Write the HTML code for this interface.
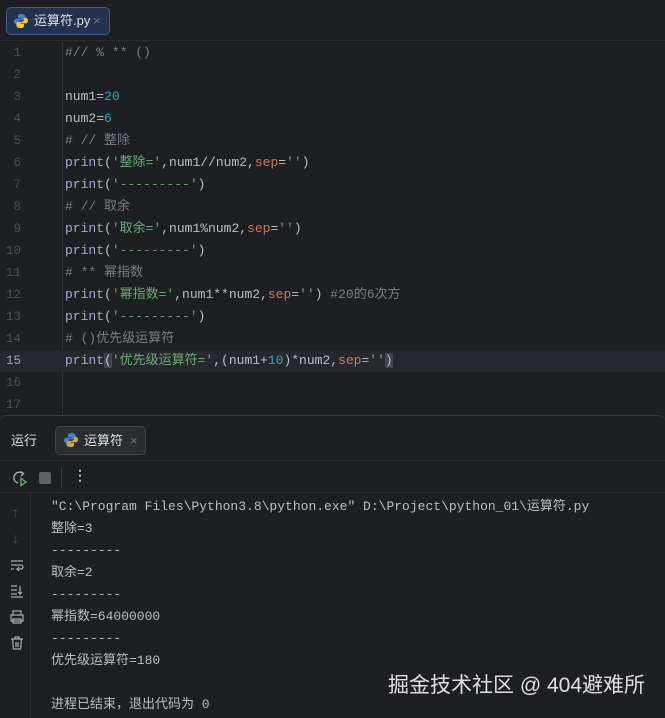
<!DOCTYPE html>
<html><head><meta charset="utf-8"><style>
*{margin:0;padding:0;box-sizing:border-box}
body{width:665px;height:718px;background:#1e1f22;overflow:hidden;position:relative;font-family:"Liberation Mono","Noto Sans CJK SC",monospace;color:#bcbec4}
.abs{position:absolute}
.ln{position:absolute;left:0;width:21px;text-align:right;font-size:12.5px;line-height:22px;height:22px;color:#4b5059}
.cl{position:absolute;left:65px;font-size:13px;line-height:22px;height:22px;white-space:pre;color:#bcbec4}
.c{color:#7a7e85}.s{color:#6aab73}.n{color:#2aacb8}.f{color:#a9a5d6}.k{color:#c77d5b}
.o{position:absolute;left:51px;font-size:13px;line-height:22px;height:22px;white-space:pre;color:#bcbec4}
</style></head><body>
<div class="abs" style="left:0;top:0;width:665px;height:41px;background:#1e1f22;border-bottom:1px solid #2b2d30"></div>
<div class="abs" style="left:6px;top:7px;width:104px;height:28px;background:#25324d;border:1px solid #3d5a8f;border-radius:5px"></div>
<svg class="abs" style="left:13px;top:13px" width="16" height="16" viewBox="0 0 16 16"><path d="M8 1c-3 0-3 1.3-3 2.5V5h3.2v.6H3.5C2 5.6 1 6.8 1 8.3s1 2.9 2.4 2.9H5V9.5c0-1.4 1.2-2.3 2.5-2.3h3c1.1 0 2-.9 2-2V3.5C12.5 2 11 1 8 1z" fill="#4a7fc7"/><path d="M8 15c3 0 3-1.3 3-2.5V11H7.8v-.6h4.7c1.5 0 2.5-1.2 2.5-2.7s-1-2.9-2.4-2.9H11v1.7c0 1.4-1.2 2.3-2.5 2.3h-3c-1.1 0-2 .9-2 2v1.7C3.5 14 5 15 8 15z" fill="#f0c93f"/></svg>
<div class="abs" style="left:34px;top:11px;font-family:'Liberation Sans','Noto Sans CJK SC',sans-serif;font-size:13px;line-height:20px;color:#dfe1e5">运算符.py</div>
<div class="abs" style="left:93px;top:11px;font-family:'Liberation Sans',sans-serif;font-size:13px;line-height:20px;color:#6f737a">×</div>
<div class="abs" style="left:62px;top:42px;width:1px;height:373px;background:#313438"></div>
<div class="abs" style="left:0;top:350px;width:665px;height:22px;background:#26282e"></div>
<div class="ln" style="top:42px">1</div><div class="ln" style="top:64px">2</div><div class="ln" style="top:86px">3</div><div class="ln" style="top:108px">4</div><div class="ln" style="top:130px">5</div><div class="ln" style="top:152px">6</div><div class="ln" style="top:174px">7</div><div class="ln" style="top:196px">8</div><div class="ln" style="top:218px">9</div><div class="ln" style="top:240px">10</div><div class="ln" style="top:262px">11</div><div class="ln" style="top:284px">12</div><div class="ln" style="top:306px">13</div><div class="ln" style="top:328px">14</div><div class="ln" style="top:350px;color:#a1a3ab">15</div><div class="ln" style="top:372px">16</div><div class="ln" style="top:394px">17</div>
<div class="cl c" style="top:42px">#// % ** ()</div>
<div class="cl" style="top:86px">num1=<span class="n">20</span></div>
<div class="cl" style="top:108px">num2=<span class="n">6</span></div>
<div class="cl c" style="top:130px"># // 整除</div>
<div class="cl" style="top:152px"><span class="f">print</span>(<span class="s">'整除='</span>,num1//num2,<span class="k">sep</span>=<span class="s">''</span>)</div>
<div class="cl" style="top:174px"><span class="f">print</span>(<span class="s">'---------'</span>)</div>
<div class="cl c" style="top:196px"># // 取余</div>
<div class="cl" style="top:218px"><span class="f">print</span>(<span class="s">'取余='</span>,num1%num2,<span class="k">sep</span>=<span class="s">''</span>)</div>
<div class="cl" style="top:240px"><span class="f">print</span>(<span class="s">'---------'</span>)</div>
<div class="cl c" style="top:262px"># ** 幂指数</div>
<div class="cl" style="top:284px"><span class="f">print</span>(<span class="s">'幂指数='</span>,num1**num2,<span class="k">sep</span>=<span class="s">''</span>) <span class="c">#20的6次方</span></div>
<div class="cl" style="top:306px"><span class="f">print</span>(<span class="s">'---------'</span>)</div>
<div class="cl c" style="top:328px"># ()优先级运算符</div>
<div class="cl" style="top:350px"><span class="f">print</span><span style="background:#43454a">(</span><span class="s">'优先级运算符='</span>,(num1+<span class="n">10</span>)*num2,<span class="k">sep</span>=<span class="s">''</span><span style="background:#43454a">)</span></div>
<div class="abs" style="left:0;top:415px;width:665px;height:303px;background:#1e1f22;border-top:1px solid #393b40;border-radius:6px 6px 0 0"></div>
<div class="abs" style="left:11px;top:431px;font-family:'Liberation Sans','Noto Sans CJK SC',sans-serif;font-size:13px;line-height:20px;color:#dfe1e5">运行</div>
<div class="abs" style="left:55px;top:426px;width:91px;height:29px;background:#2b2d30;border:1px solid #43454a;border-radius:5px"></div>
<svg class="abs" style="left:63px;top:432px" width="16" height="16" viewBox="0 0 16 16"><path d="M8 1c-3 0-3 1.3-3 2.5V5h3.2v.6H3.5C2 5.6 1 6.8 1 8.3s1 2.9 2.4 2.9H5V9.5c0-1.4 1.2-2.3 2.5-2.3h3c1.1 0 2-.9 2-2V3.5C12.5 2 11 1 8 1z" fill="#4a7fc7"/><path d="M8 15c3 0 3-1.3 3-2.5V11H7.8v-.6h4.7c1.5 0 2.5-1.2 2.5-2.7s-1-2.9-2.4-2.9H11v1.7c0 1.4-1.2 2.3-2.5 2.3h-3c-1.1 0-2 .9-2 2v1.7C3.5 14 5 15 8 15z" fill="#c9a94a"/></svg>
<div class="abs" style="left:84px;top:431px;font-family:'Liberation Sans','Noto Sans CJK SC',sans-serif;font-size:13px;line-height:20px;color:#dfe1e5">运算符</div>
<div class="abs" style="left:130px;top:431px;font-family:'Liberation Sans',sans-serif;font-size:13px;line-height:20px;color:#6f737a">×</div>
<div class="abs" style="left:0;top:460px;width:665px;height:1px;background:#2b2d30"></div>
<svg class="abs" style="left:11px;top:469px" width="18" height="18" viewBox="0 0 18 18"><path d="M12 4.5A5.5 5.5 0 1 0 7 14" fill="none" stroke="#a8abb0" stroke-width="1.4"/><path d="M9.5 2.5l3 2-2.5 2.5" fill="none" stroke="#a8abb0" stroke-width="1.4"/><path d="M10 9.5v7l5-3.5z" fill="none" stroke="#5fb865" stroke-width="1.3"/></svg>
<div class="abs" style="left:39px;top:472px;width:12px;height:12px;background:#5f6166;border-radius:2px"></div>
<div class="abs" style="left:61px;top:467px;width:1px;height:22px;background:#393b40"></div>
<div class="abs" style="left:73px;top:467px;font-size:14px;line-height:20px;color:#bcbec4;font-weight:bold">⋮</div>
<div class="abs" style="left:0;top:492px;width:665px;height:1px;background:#2b2d30"></div>
<div class="abs" style="left:30px;top:493px;width:1px;height:225px;background:#2b2d30"></div>
<div class="abs" style="left:11px;top:504px;font-size:14px;line-height:20px;color:#55585e">↑</div>
<div class="abs" style="left:11px;top:530px;font-size:14px;line-height:20px;color:#55585e">↓</div>
<svg class="abs" style="left:9px;top:558px" width="16" height="16" viewBox="0 0 16 16" fill="none" stroke="#a8abb0" stroke-width="1.2"><path d="M2 3h12M2 7h10a2 2 0 0 1 0 4H8l2-2M8 11l2 2M2 11h3"/></svg>
<svg class="abs" style="left:9px;top:583px" width="16" height="16" viewBox="0 0 16 16" fill="none" stroke="#a8abb0" stroke-width="1.2"><path d="M2 3h6M2 7h6M2 11h6M2 14h12M11 3v8l-2-2M11 11l2-2"/></svg>
<svg class="abs" style="left:9px;top:609px" width="16" height="16" viewBox="0 0 16 16" fill="none" stroke="#a8abb0" stroke-width="1.2"><path d="M4 6V2h8v4M2 6h12v6H2zM4 10h8v4H4z"/></svg>
<svg class="abs" style="left:9px;top:635px" width="16" height="16" viewBox="0 0 16 16" fill="none" stroke="#a8abb0" stroke-width="1.2"><path d="M2 4h12M6 4V2h4v2M3.5 4l1 10h7l1-10M7 7v5M9 7v5"/></svg>
<div class="o" style="top:496px">"C:\Program Files\Python3.8\python.exe" D:\Project\python_01\运算符.py</div>
<div class="o" style="top:518px">整除=3</div>
<div class="o" style="top:540px">---------</div>
<div class="o" style="top:562px">取余=2</div>
<div class="o" style="top:584px">---------</div>
<div class="o" style="top:606px">幂指数=64000000</div>
<div class="o" style="top:628px">---------</div>
<div class="o" style="top:650px">优先级运算符=180</div>
<div class="o" style="top:694px">进程已结束，退出代码为 0</div>
<div class="abs" style="left:388px;top:672px;font-family:'Liberation Sans','Noto Sans CJK SC',sans-serif;font-size:21px;line-height:28px;color:#e0e0e0">掘金技术社区 @ 404避难所</div>
</body></html>
